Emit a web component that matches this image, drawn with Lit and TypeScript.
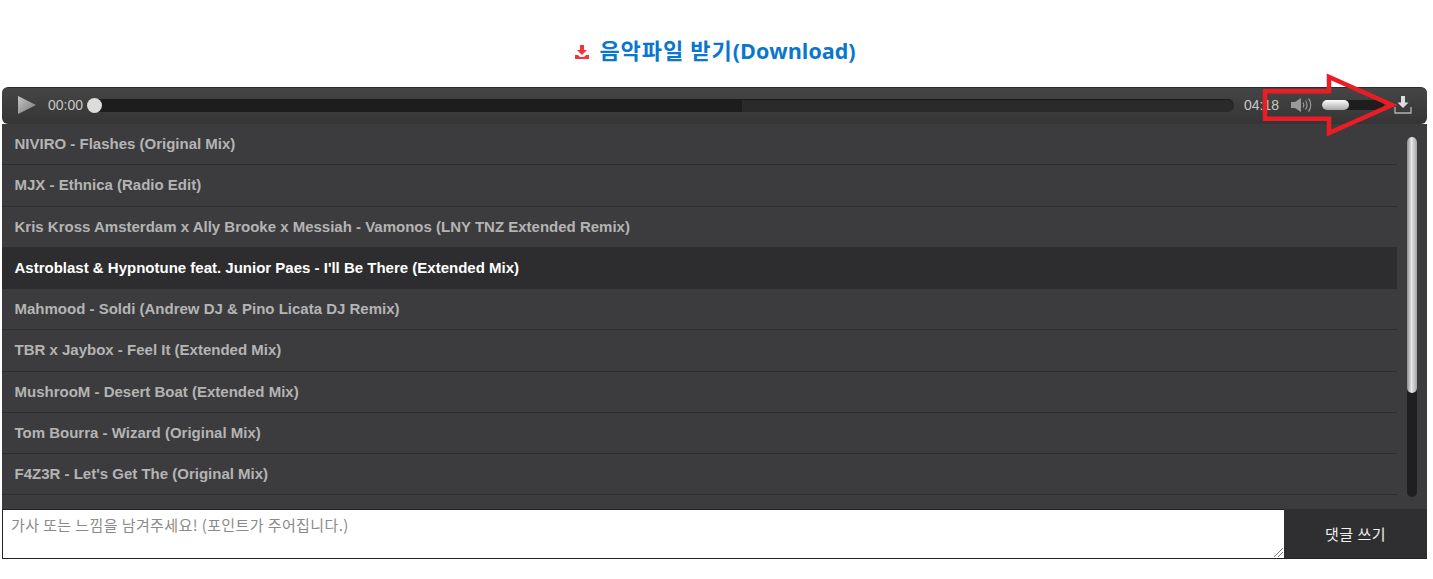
import { LitElement, html, css, svg } from "lit";
import { customElement } from "lit/decorators.js";

const TRACKS = [
  "NIVIRO - Flashes (Original Mix)",
  "MJX - Ethnica (Radio Edit)",
  "Kris Kross Amsterdam x Ally Brooke x Messiah - Vamonos (LNY TNZ Extended Remix)",
  "Astroblast & Hypnotune feat. Junior Paes - I'll Be There (Extended Mix)",
  "Mahmood - Soldi (Andrew DJ & Pino Licata DJ Remix)",
  "TBR x Jaybox - Feel It (Extended Mix)",
  "MushrooM - Desert Boat (Extended Mix)",
  "Tom Bourra - Wizard (Original Mix)",
  "F4Z3R - Let's Get The (Original Mix)",
];

@customElement("app-root")
export class AppRoot extends LitElement {
  static styles = css`
    :host { display: block; position: relative; height: 579px; background: #fff; overflow: hidden;
      font-family: "Liberation Sans", "Noto Sans CJK KR", sans-serif; }
    .title { height: 87px; box-sizing: border-box; padding-top: 35px; display: flex; justify-content: center; align-items: flex-start; gap: 9px; padding-right: 3px; }
    .title a { font-size: 21.5px; line-height: 28px; font-weight: 700; color: #0877cc; font-family: "Open Sans", "Noto Sans CJK KR", sans-serif; }
    .title a span { font-size: 22px; letter-spacing: 1px; font-family: "Noto Sans CJK KR", sans-serif; font-weight: 700; }
    .title svg { width: 16px; height: 16px; margin-top: 9px; }
    .wrap { margin: 0 6px 0 2px; }
    .player { height: 37px; display: flex; align-items: center; border-radius: 6px; background: linear-gradient(#454545, #353535); border-top: 1px solid #2c2c2c; box-sizing: border-box; color: #c8c8c8; font-size: 14px; padding: 0 0 2px 16px; }
    .play { width: 18px; height: 18px; flex: none; margin-right: 12px; }
    .time { width: 38px; flex: none; }
    .rail { width: 1146px; flex: none; height: 13px; border-radius: 7px; background: #2a2a2a; position: relative; box-shadow: inset 0 1px 1px #1a1a1a; margin-left: 2px; }
    .rail .buf { position: absolute; left: 0; top: 0; bottom: 0; width: 654px; background: #1d1d1d; border-radius: 7px 0 0 7px; }
    .rail .knob { position: absolute; left: -1px; top: -1px; width: 15px; height: 15px; border-radius: 50%; background: #dcdcdc; }
    .end { margin-left: 10px; width: 35px; flex: none; }
    .speaker { width: 21px; height: 16px; margin-left: 12px; flex: none; }
    .vol { width: 62px; height: 10px; margin-left: 10px; background: #1e1e1e; border-radius: 5px; position: relative; flex: none; }
    .vol i { display: block; height: 100%; width: 27px; border-radius: 5px; background: linear-gradient(#fdfdfd, #a8a8a8); }
    .dl { width: 18px; height: 18px; margin-left: 10px; flex: none; }
    .list { height: 385px; background: #3c3c3e; display: flex; box-sizing: border-box; }
    .rows { width: 1395px; flex: none; }
    .row { height: 41.25px; box-sizing: border-box; border-bottom: 1px solid #2e2e2e; padding: 0 0 1px 12.500px; display: flex; align-items: center; color: #b4b4b4; font-size: 15px; font-weight: 700; }
    .row.on { background: #2d2d2f; color: #fff; border-bottom-color: #2d2d2f; }
    .bar { width: 10px; height: 360px; margin: 13px 0 0 10px; background: #1f1f1f; border-radius: 5px; flex: none; }
    .bar i { display: block; height: 256px; border-radius: 5px; background: linear-gradient(90deg, #8c8c8c, #e8e8e8 45%, #a0a0a0); }
    .reply { display: flex; height: 50px; box-sizing: border-box; border-bottom: 1px solid #222; }
    .input { flex: 1; border: 1px solid #222; border-bottom: 0; border-right: 0; padding: 5px 8px; font-size: 15px; letter-spacing: 0.4px; color: #8a8a8a; position: relative; background: #fff; font-family: "Noto Sans CJK KR", sans-serif; line-height: 20px; }
    .grip { position: absolute; right: 1px; bottom: 1px; width: 9px; height: 9px; }
    .send { width: 143px; flex: none; background: #2f2f31; color: #f0f0f0; font-size: 15px; letter-spacing: 0.5px; display: flex; align-items: center; justify-content: center; font-family: "Noto Sans CJK KR", sans-serif; }
    .arrow { position: absolute; left: 1260px; top: 72px; width: 140px; height: 66px; pointer-events: none; }
  `;

  render() {
    return html`
      <div class="title">
        <svg viewBox="0 0 16 16"><path fill="#f4333a" d="M6 1h4v5h3l-5 5-5-5h3z"/><path fill="#f4333a" d="M1 11h3l2 2h4l2-2h3v4H1z"/></svg>
        <a><span>음악파일 받기</span>(Download)</a>
      </div>
      <div class="wrap">
        <div class="player">
          <svg class="play" viewBox="0 0 18 18"><defs><linearGradient id="p" x1="0" x2="1" y1="0" y2="1"><stop offset="0" stop-color="#c4c4c4"/><stop offset="1" stop-color="#7a7a7a"/></linearGradient></defs><path fill="url(#p)" d="M0 0l18 9-18 9z"/></svg>
          <span class="time">00:00</span>
          <div class="rail"><div class="buf"></div><div class="knob"></div></div>
          <span class="end">04:18</span>
          <svg class="speaker" viewBox="0 0 21 16" fill="none" stroke="#9a9a9a"><path fill="#9a9a9a" stroke="none" d="M0 5h4l6-4v14l-6-4H0z"/><path d="M12 5.500c1 1.500 1 3.500 0 5M14.500 3.500c2 2.500 2 6.500 0 9M17.500 1.500c3 3.500 3 9.500 0 13" stroke-width="1.200"/></svg>
          <div class="vol"><i></i></div>
          <svg class="dl" viewBox="0 0 18 18"><path fill="#dcdcdc" d="M7 0h4v6.500h3.500L9 12 3.500 6.500H7z"/><path fill="none" stroke="#b4b4b4" stroke-width="1.300" d="M1 11v6h16v-6"/></svg>
        </div>
        <div class="list">
          <div class="rows">
            ${TRACKS.map((t, i) => html`<div class="row ${i === 3 ? "on" : ""}">${t}</div>`)}
          </div>
          <div class="bar"><i></i></div>
        </div>
        <div class="reply">
          <div class="input">가사 또는 느낌을 남겨주세요! (포인트가 주어집니다.)
            <svg class="grip" viewBox="0 0 9 9" stroke="#777" fill="none"><path d="M0 9L9 0M4 9l5-5"/></svg>
          </div>
          <div class="send">댓글 쓰기</div>
        </div>
      </div>
      ${svg`<svg class="arrow" viewBox="1260 72 140 66"><path d="M1265 91.300h64V77L1392 105l-63 28V118.800H1265z" fill="none" stroke="#ed1c24" stroke-width="4.500"/></svg>`}
    `;
  }
}
